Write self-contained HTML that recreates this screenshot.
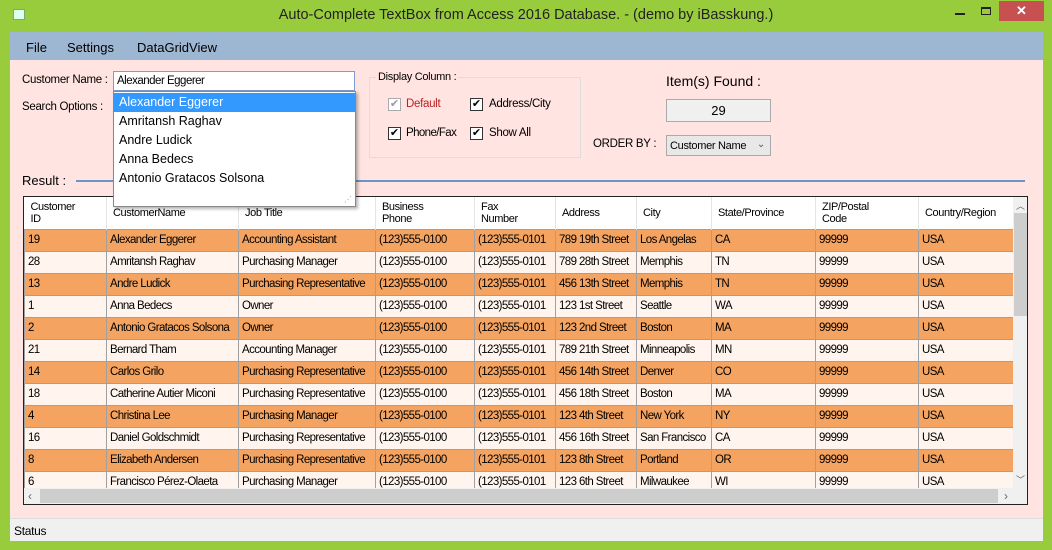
<!DOCTYPE html><html><head><meta charset="utf-8"><style>
*{box-sizing:border-box;margin:0;padding:0}
body{width:1052px;height:550px;background:#99cc3c;position:relative;overflow:hidden;font-family:"Liberation Sans",sans-serif;font-size:12px;color:#000}
.a{position:absolute}
.title{left:0;top:7px;width:1052px;text-align:center;font-size:14.5px;color:#222}
.client{left:10px;top:32px;width:1033px;height:509px;background:#ffe4e1}
.menu{left:10px;top:32px;width:1033px;height:28px;background:#9db6d2;font-size:13px}
.menu span{position:absolute;top:8px}
table{border-collapse:collapse;table-layout:fixed}
td{border:1px solid #a0a0a0;height:22px;padding:0 0 0 3px;white-space:nowrap;overflow:hidden;font-size:11.5px;letter-spacing:-0.6px}
th{border-right:1px solid #e4e4e4;height:32px;font-weight:normal;text-align:left;padding:0 0 0 6px;font-size:11px;line-height:12px;background:#fff;vertical-align:middle;letter-spacing:-0.4px}
tr.o td{background:#f4a460}
tr.w td{background:#fff5ee}
.cb{width:13px;height:13px;border:1px solid #333;background:#fff;font-size:11px;line-height:11px;text-align:center}
.l{font-size:11.5px;letter-spacing:-0.3px}
</style></head><body>
<div class="a" style="left:13px;top:9px;width:12px;height:11px;background:#dfe;border:1px solid #7a7"></div>
<div class="a title">Auto-Complete TextBox from Access 2016 Database. - (demo by iBasskung.)</div>
<div class="a" style="left:955px;top:13px;width:10px;height:2px;background:#222"></div>
<div class="a" style="left:981px;top:7px;width:10px;height:8px;border:1px solid #222;border-top-width:2px"></div>
<div class="a" style="left:999px;top:1px;width:45px;height:20px;background:#c75050;color:#fff;text-align:center;font-size:13px;line-height:20px;font-weight:bold">✕</div>
<div class="a client"></div>
<div class="a menu"><span style="left:16px">File</span><span style="left:57px">Settings</span><span style="left:127px">DataGridView</span></div>
<div class="a l" style="left:22px;top:74px">Customer Name :</div>
<div class="a l" style="left:22px;top:101px">Search Options :</div>
<div class="a" style="left:113px;top:71px;width:242px;height:20px;background:#fff;border:1px solid #7a9cd3;padding:3px 3px;letter-spacing:-0.5px;font-size:11.5px">Alexander Eggerer</div>
<div class="a" style="left:369px;top:77px;width:212px;height:81px;border:1px solid #ddd"></div>
<div class="a l" style="left:376px;top:71px;background:#ffe4e1;padding:0 2px;font-size:11px">Display Column :</div>
<div class="a cb" style="left:388px;top:98px;border-color:#aaa;color:#999">✔</div><div class="a l" style="left:406px;top:98px;color:#b22">Default</div>
<div class="a cb" style="left:470px;top:98px">✔</div><div class="a l" style="left:489px;top:98px">Address/City</div>
<div class="a cb" style="left:388px;top:127px">✔</div><div class="a l" style="left:406px;top:127px;letter-spacing:-0.6px">Phone/Fax</div>
<div class="a cb" style="left:470px;top:127px">✔</div><div class="a l" style="left:489px;top:127px">Show All</div>
<div class="a" style="left:666px;top:73px;font-size:14px">Item(s) Found :</div>
<div class="a" style="left:666px;top:99px;width:105px;height:23px;background:#f0f0f0;border:1px solid #aaa;text-align:center;line-height:21px;font-size:13px">29</div>
<div class="a l" style="left:593px;top:138px">ORDER BY :</div>
<div class="a" style="left:666px;top:135px;width:105px;height:21px;background:#e8e8e8;border:1px solid #aaa;padding:4px 3px;font-size:11px;letter-spacing:-0.3px">Customer Name<span style="position:absolute;right:5px;top:3px;font-size:10px;color:#555">⌄</span></div>
<div class="a" style="left:22px;top:173px;font-size:13px">Result :</div>
<div class="a" style="left:76px;top:180px;width:949px;height:2px;background:#6d95c8"></div>
<div class="a" style="left:23px;top:196px;width:1005px;height:309px;background:#fff;border:1px solid #222;overflow:hidden">
<table style="width:989px">
<colgroup><col style="width:82px"><col style="width:132px"><col style="width:137px"><col style="width:99px"><col style="width:81px"><col style="width:81px"><col style="width:75px"><col style="width:104px"><col style="width:103px"><col style="width:95px"></colgroup>
<tr><th>Customer<br>ID</th><th>CustomerName</th><th>Job Title</th><th>Business<br>Phone</th><th>Fax<br>Number</th><th>Address</th><th>City</th><th>State/Province</th><th>ZIP/Postal<br>Code</th><th>Country/Region</th></tr>
<tr class="o"><td>19</td><td>Alexander Eggerer</td><td>Accounting Assistant</td><td>(123)555-0100</td><td>(123)555-0101</td><td>789 19th Street</td><td>Los Angelas</td><td>CA</td><td>99999</td><td>USA</td></tr>
<tr class="w"><td>28</td><td>Amritansh Raghav</td><td>Purchasing Manager</td><td>(123)555-0100</td><td>(123)555-0101</td><td>789 28th Street</td><td>Memphis</td><td>TN</td><td>99999</td><td>USA</td></tr>
<tr class="o"><td>13</td><td>Andre Ludick</td><td>Purchasing Representative</td><td>(123)555-0100</td><td>(123)555-0101</td><td>456 13th Street</td><td>Memphis</td><td>TN</td><td>99999</td><td>USA</td></tr>
<tr class="w"><td>1</td><td>Anna Bedecs</td><td>Owner</td><td>(123)555-0100</td><td>(123)555-0101</td><td>123 1st Street</td><td>Seattle</td><td>WA</td><td>99999</td><td>USA</td></tr>
<tr class="o"><td>2</td><td>Antonio Gratacos Solsona</td><td>Owner</td><td>(123)555-0100</td><td>(123)555-0101</td><td>123 2nd Street</td><td>Boston</td><td>MA</td><td>99999</td><td>USA</td></tr>
<tr class="w"><td>21</td><td>Bernard Tham</td><td>Accounting Manager</td><td>(123)555-0100</td><td>(123)555-0101</td><td>789 21th Street</td><td>Minneapolis</td><td>MN</td><td>99999</td><td>USA</td></tr>
<tr class="o"><td>14</td><td>Carlos Grilo</td><td>Purchasing Representative</td><td>(123)555-0100</td><td>(123)555-0101</td><td>456 14th Street</td><td>Denver</td><td>CO</td><td>99999</td><td>USA</td></tr>
<tr class="w"><td>18</td><td>Catherine Autier Miconi</td><td>Purchasing Representative</td><td>(123)555-0100</td><td>(123)555-0101</td><td>456 18th Street</td><td>Boston</td><td>MA</td><td>99999</td><td>USA</td></tr>
<tr class="o"><td>4</td><td>Christina Lee</td><td>Purchasing Manager</td><td>(123)555-0100</td><td>(123)555-0101</td><td>123 4th Street</td><td>New York</td><td>NY</td><td>99999</td><td>USA</td></tr>
<tr class="w"><td>16</td><td>Daniel Goldschmidt</td><td>Purchasing Representative</td><td>(123)555-0100</td><td>(123)555-0101</td><td>456 16th Street</td><td>San Francisco</td><td>CA</td><td>99999</td><td>USA</td></tr>
<tr class="o"><td>8</td><td>Elizabeth Andersen</td><td>Purchasing Representative</td><td>(123)555-0100</td><td>(123)555-0101</td><td>123 8th Street</td><td>Portland</td><td>OR</td><td>99999</td><td>USA</td></tr>
<tr class="w"><td>6</td><td>Francisco Pérez-Olaeta</td><td>Purchasing Manager</td><td>(123)555-0100</td><td>(123)555-0101</td><td>123 6th Street</td><td>Milwaukee</td><td>WI</td><td>99999</td><td>USA</td></tr>
</table>
<div class="a" style="left:989px;top:0;width:15px;height:291px;background:#f0f0f0"><div class="a" style="left:1px;top:16px;width:13px;height:103px;background:#cdcdcd"></div><div class="a" style="left:3px;top:2px;font-size:9px;color:#666">︿</div><div class="a" style="left:3px;top:276px;font-size:9px;color:#666">﹀</div></div>
<div class="a" style="left:0;top:291px;width:1004px;height:16px;background:#f0f0f0"><div class="a" style="left:16px;top:1px;width:958px;height:14px;background:#cdcdcd"></div><div class="a" style="left:4px;top:1px;color:#666">‹</div><div class="a" style="left:980px;top:1px;color:#666">›</div></div>
</div>
<div class="a" style="left:113px;top:91px;width:243px;height:116px;background:#fff;border:1px solid #888;box-shadow:2px 2px 3px rgba(0,0,0,.3);font-size:12.5px">
<div style="background:#3399ff;color:#fff;height:19px;padding:2px 5px;margin-top:1px">Alexander Eggerer</div>
<div style="height:19px;padding:2px 5px">Amritansh Raghav</div>
<div style="height:19px;padding:2px 5px">Andre Ludick</div>
<div style="height:19px;padding:2px 5px">Anna Bedecs</div>
<div style="height:19px;padding:2px 5px">Antonio Gratacos Solsona</div>
<div class="a" style="right:3px;bottom:2px;font-size:8px;color:#999">⋰</div>
</div>
<div class="a" style="left:10px;top:518px;width:1033px;height:23px;background:#f0f0f0;border-top:1px solid #ddd;padding:5px 4px;letter-spacing:-0.3px">Status</div>
</body></html>
